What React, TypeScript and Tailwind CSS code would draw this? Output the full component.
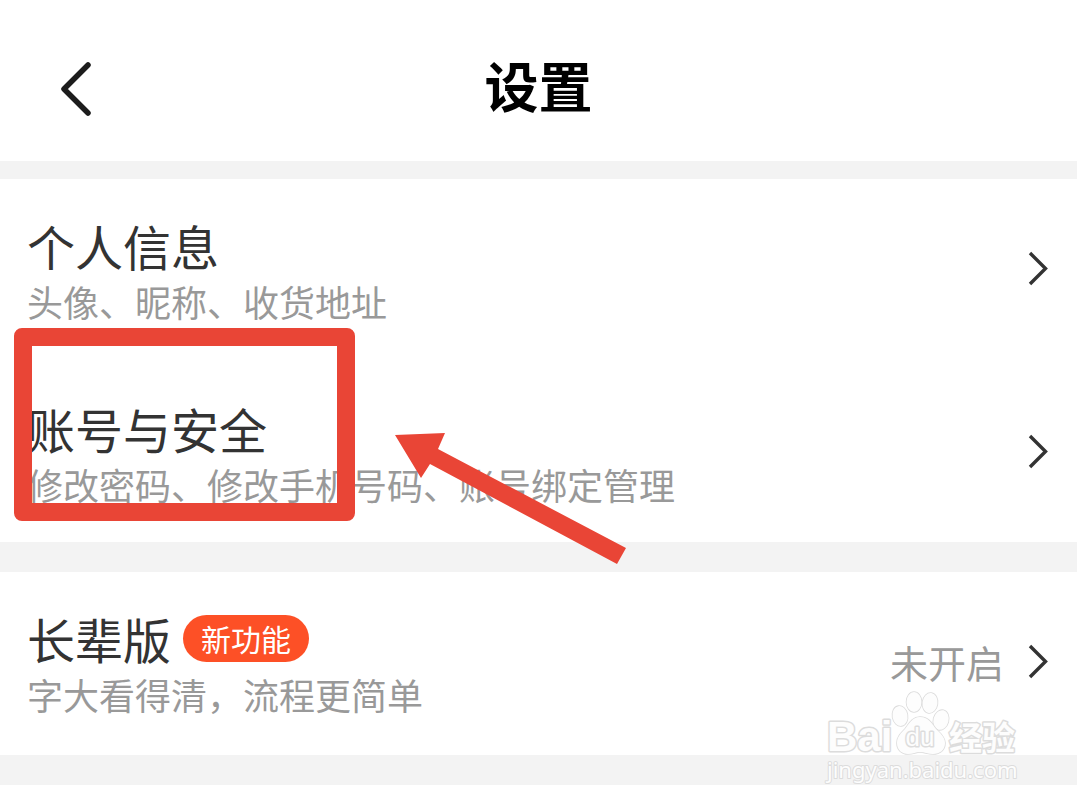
import type { ReactNode } from "react";

type RowProps = {
  title: string;
  description: string;
  badge?: string;
  value?: string;
  children?: ReactNode;
};

const BackIcon = () => (
  <svg width="34" height="58" viewBox="0 0 34 58" fill="none" aria-hidden="true">
    <path
      d="M30 5 6 29 30 53"
      stroke="#1c1c1c"
      strokeWidth="5.5"
      strokeLinecap="round"
      strokeLinejoin="round"
    />
  </svg>
);

const ChevronIcon = () => (
  <svg width="20" height="36" viewBox="0 0 20 36" fill="none" aria-hidden="true">
    <path d="M2 2 17.5 17.5 2 33" stroke="#333333" strokeWidth="3.4" />
  </svg>
);

const SettingRow = ({ title, description, badge, value, children }: RowProps) => (
  <li className="relative">
    <button
      type="button"
      className="flex w-full items-center justify-between gap-4 pr-[29px] pl-[27px] text-left"
    >
      <span className="flex flex-col pt-[38px] pb-[30px]">
        <span className="flex items-center gap-3 text-5xl leading-[56px] text-[#333333]">
          {title}
          {badge && (
            <span className="rounded-full bg-[#fd5026] px-[18px] text-3xl leading-[47px] text-white">
              {badge}
            </span>
          )}
        </span>
        <span className="text-4xl leading-[56px] text-[#999999]">
          {description}
        </span>
      </span>
      <span className="flex shrink-0 items-center gap-6 text-[38px] leading-[56px] text-[#999999]">
        {value}
        <ChevronIcon />
      </span>
    </button>
    {children}
  </li>
);

const Highlight = () => (
  <>
    <div className="pointer-events-none absolute -top-[34px] left-[14px] h-[193px] w-[341px] rounded-lg border-18 border-[#e94536]" />
    <svg
      className="pointer-events-none absolute top-[70px] left-[395px] z-10"
      width="232"
      height="134"
      viewBox="0 0 232 134"
      aria-hidden="true"
    >
      <path d="M0 3 50 1 43 17 231 116 222 132 35 32 26 46Z" fill="#e94536" />
    </svg>
  </>
);

const Watermark = () => (
  <svg
    className="pointer-events-none absolute top-[116px] right-[53px] z-10 font-['Liberation_Sans','Noto_Sans_CJK_SC',sans-serif]"
    width="202"
    height="98"
    viewBox="0 0 202 98"
    fill="#fdfdfd"
    stroke="#dcdcdc"
    strokeWidth="3"
    strokeLinejoin="round"
    paintOrder="stroke"
  >
    <text x="5" y="63" fontSize="42" fontWeight="700">
      Bai
    </text>
    <g strokeWidth="1.6">
      <ellipse cx="78" cy="28" rx="7.5" ry="10" transform="rotate(-10 78 28)" />
      <ellipse cx="92" cy="14" rx="7.5" ry="10" />
      <ellipse cx="108" cy="15" rx="7.5" ry="10" transform="rotate(8 108 15)" />
      <ellipse cx="119" cy="32" rx="7.5" ry="10" transform="rotate(15 119 32)" />
      <path d="M98 29c-8 0-11 7-15 12-4 4-8 8-8 14 0 7 5 11 11 11 5 0 8-2 12-2s8 2 13 2c7 0 12-4 12-11 0-6-5-10-9-14-4-5-7-12-16-12Z" />
    </g>
    <text x="98" y="58" fontSize="26" textAnchor="middle">
      du
    </text>
    <text x="127" y="62" fontSize="33" fontWeight="700">
      经验
    </text>
    <text
      x="5"
      y="90"
      fontSize="22"
      strokeWidth="2"
      className="font-['Noto_Sans',sans-serif]"
    >
      jingyan.baidu.com
    </text>
  </svg>
);

export default function App() {
  return (
    <div className="min-h-screen bg-white font-['Noto_Sans_CJK_SC',sans-serif]">
      <header className="grid grid-cols-[1fr_auto_1fr] items-center px-[58px] pt-[49px] pb-8">
        <button type="button" aria-label="返回" className="justify-self-start">
          <BackIcon />
        </button>
        <h1 className="pb-2 text-[54px] leading-[72px] font-bold text-black">
          设置
        </h1>
      </header>
      <main>
        <ul className="flex flex-col gap-[3px] border-t-18 border-[#f3f3f3]">
          <SettingRow title="个人信息" description="头像、昵称、收货地址" />
          <SettingRow
            title="账号与安全"
            description="修改密码、修改手机号码、账号绑定管理"
          >
            <Highlight />
          </SettingRow>
        </ul>
        <div className="relative border-y-30 border-[#f3f3f3] pb-[3px]">
          <ul>
            <SettingRow
              title="长辈版"
              description="字大看得清，流程更简单"
              badge="新功能"
              value="未开启"
            />
          </ul>
          <Watermark />
        </div>
      </main>
    </div>
  );
}
